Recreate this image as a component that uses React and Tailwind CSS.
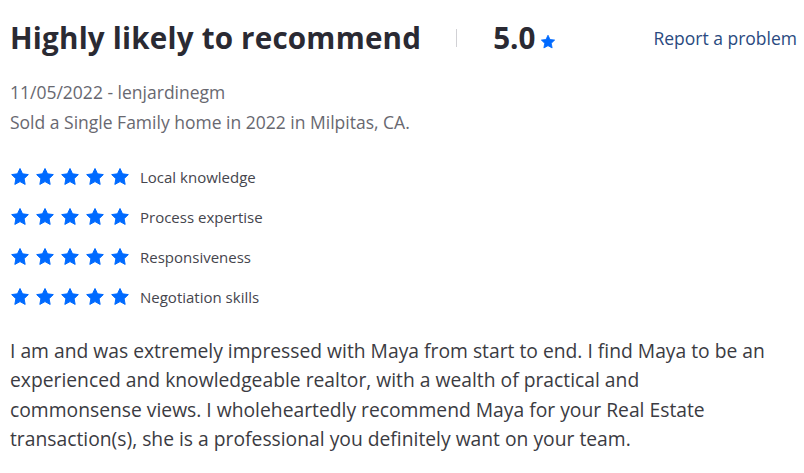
function StarIcon({ className }) {
  return (
    <svg viewBox="0 0 24 24" className={className} fill="currentColor">
      <path d="M12 1.8l3.05 6.4 6.95.9-5.1 4.85 1.3 6.95L12 17.5l-6.2 3.4 1.3-6.95L2 9.1l6.95-.9z" strokeLinejoin="round" stroke="currentColor" strokeWidth="1.2" />
    </svg>
  )
}

const ratings = ['Local knowledge', 'Process expertise', 'Responsiveness', 'Negotiation skills']

export default function App() {
  return (
    <div className="bg-white w-[804px] h-[473px] overflow-hidden px-[10px] pt-[18px]" style={{ fontFamily: '"Open Sans", sans-serif' }}>
      <div className="flex items-center">
        <h2 className="text-[29.6px] font-bold text-[#2a2a33] leading-[40px] tracking-[0.2px]">Highly likely to recommend</h2>
        <div className="ml-[35px] w-px h-[18px] bg-[#d1d1d5]" />
        <span className="ml-[36px] text-[29.6px] font-bold text-[#2a2a33] leading-[40px]">5.0</span>
        <StarIcon className="ml-[5px] mt-[7px] w-[16px] h-[16px] text-[#006aff]" />
        <a className="ml-auto text-[17.5px] text-[#2a4a80] leading-[40px] -mr-[3px]">Report a problem</a>
      </div>
      <div className="mt-[19px] text-[17.5px] text-[#686870] leading-[30px]">
        <div>11/05/2022 - lenjardinegm</div>
        <div>Sold a Single Family home in 2022 in Milpitas, CA.</div>
      </div>
      <div className="mt-[20px] flex flex-col">
        {ratings.map((r) => (
          <div key={r} className="flex items-center h-[40px]">
            <div className="flex gap-[5px]">
              {[0, 1, 2, 3, 4].map((i) => (
                <StarIcon key={i} className="w-[20px] h-[20px] text-[#006aff]" />
              ))}
            </div>
            <span className="ml-[10px] text-[15px] text-[#45454d]">{r}</span>
          </div>
        ))}
      </div>
      <p className="mt-[19px] text-[19.3px] leading-[29.4px] text-[#3b3b42] whitespace-nowrap">
        I am and was extremely impressed with Maya from start to end. I find Maya to be an<br />
        experienced and knowledgeable realtor, with a wealth of practical and<br />
        commonsense views. I wholeheartedly recommend Maya for your Real Estate<br />
        transaction(s), she is a professional you definitely want on your team.
      </p>
    </div>
  )
}
